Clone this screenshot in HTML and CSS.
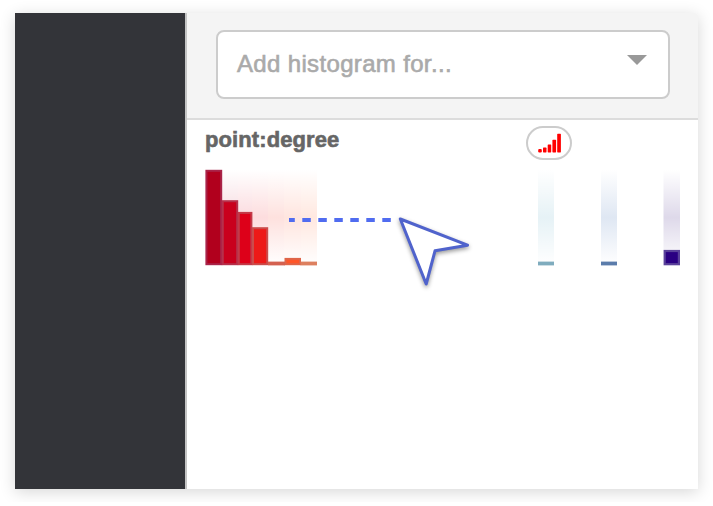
FILE: index.html
```html
<!DOCTYPE html>
<html lang="en">
<head>
<meta charset="utf-8">
<title>Histograms</title>
<link rel="stylesheet" href="styles.css">
</head>
<body>
<div class="window">
  <aside class="sidebar"></aside>
  <main class="panel">
    <header class="toolbar">
      <div class="select">
        <span class="placeholder">Add histogram for...</span>
        <svg class="caret" width="20" height="10" viewBox="0 0 20 10"><path d="M0 0H20L10 10Z" fill="#999"/></svg>
      </div>
    </header>
    <section class="histogram">
      <div class="title-row">
        <h2 class="title">point:degree</h2>
        <button class="encode" aria-label="Color by value">
          <svg width="24" height="20" viewBox="-1 -.6 24 20" fill="#f00"><rect x="0.2" y="15.3" width="3.6" height="3.5" rx="1.2"/><rect x="5" y="14" width="3.5" height="4.8" rx=".6"/><rect x="9.7" y="10.8" width="3.5" height="8" rx=".6"/><rect x="14.4" y="6.2" width="3.7" height="12.6" rx=".6"/><rect x="19.2" y="0.2" width="3.7" height="18.6" rx=".6"/></svg>
        </button>
      </div>
      <svg class="chart" width="480" height="100" viewBox="205 168 480 100">
        <defs>
          <linearGradient id="fade" x1="0" y1="0" x2="0" y2="1">
            <stop offset="0" stop-color="#fff" stop-opacity="1"/>
            <stop offset=".5" stop-color="#fff" stop-opacity="0"/>
            <stop offset="1" stop-color="#fff" stop-opacity="1"/>
          </linearGradient>
        </defs>
        <g>
          <rect x="222" y="170" width="16" height="94" fill="#f7dbe0"/>
          <rect x="238" y="170" width="14" height="94" fill="#fbdbdf"/>
          <rect x="252" y="170" width="16" height="94" fill="#fdddde"/>
          <rect x="268" y="170" width="16" height="94" fill="#fee1de"/>
          <rect x="284" y="170" width="17" height="94" fill="#ffe5df"/>
          <rect x="301" y="170" width="16" height="94" fill="#ffe8e0"/>
          <rect x="538" y="170" width="16" height="94" fill="#e6f2f6"/>
          <rect x="601" y="170" width="16" height="94" fill="#dfe7f3"/>
          <rect x="663.5" y="170" width="16.5" height="94" fill="#ded9ea"/>
          <rect x="205" y="170" width="476" height="95" fill="url(#fade)"/>
        </g>
        <g stroke-width="2">
          <rect x="206.4" y="170.8" width="14.8" height="93.4" fill="#b1001d" stroke="#a92449"/>
          <rect x="222.8" y="201.2" width="14.4" height="63" fill="#c9001d" stroke="#b6304b"/>
          <rect x="238.8" y="212.9" width="12.6" height="51.3" fill="#dd0019" stroke="#c33a48"/>
          <rect x="253" y="228.2" width="14.2" height="36" fill="#ed1a18" stroke="#cb4c4b"/>
          <rect x="285.5" y="258.9" width="14.5" height="5.3" fill="#ff5528" stroke="#df6549"/>
        </g>
        <rect x="268" y="261.6" width="17" height="3.8" fill="#d46150"/>
        <rect x="300.5" y="261.6" width="16.5" height="3.8" fill="#dd805f"/>
        <rect x="538" y="261.6" width="16" height="3.8" fill="#7facbe"/>
        <rect x="601" y="261.6" width="16" height="3.8" fill="#5b7cab"/>
        <rect x="664.7" y="251" width="14.2" height="13.2" fill="#2a0082" stroke="#5a429a" stroke-width="2.2"/>
      </svg>
    </section>
  </main>
  <svg class="drag-cursor" width="200" height="90" viewBox="284 205 200 90">
    <path d="M289 220H391" stroke="#506cf0" stroke-width="4" stroke-dasharray="8.5 7.5" stroke-dashoffset="2.7" fill="none"/>
    <path class="pointer" d="M400.3 219L467.5 245.2L435 250.8L426.2 284Z" fill="#fff" stroke="#5063cc" stroke-width="3" stroke-linejoin="round"/>
  </svg>
</div>
</body>
</html>
```

FILE: styles.css
```css
* { box-sizing: border-box; }
body {
  margin: 0;
  padding: 13px 15px;
  background: #fff;
  font-family: "Liberation Sans", Arial, sans-serif;
}
.window {
  position: relative;
  display: flex;
  width: 683px;
  height: 476px;
  background: #fff;
  border-radius: 0 3px 0 0;
  box-shadow: 0 3px 16px rgba(0, 0, 0, .16);
}
.sidebar {
  flex: 0 0 172px;
  background: #333439;
  border-right: 2px solid #c4c4c4;
}
.panel { flex: 1; }
.toolbar {
  height: 107px;
  padding: 17px 28px 0 29px;
  background: #f4f4f4;
  border-bottom: 2px solid #dcdcdc;
  border-radius: 0 3px 0 0;
}
.select {
  display: flex;
  justify-content: space-between;
  height: 69px;
  padding: 18px 21px 0 19px;
  background: #fff;
  border: 2px solid #ccc;
  border-radius: 8px;
}
.placeholder {
  color: #aaa;
  font-size: 24px;
  line-height: 28px;
  letter-spacing: .34px;
  -webkit-text-stroke: .6px #aaa;
}
.caret { margin-top: 5px; }
.histogram { padding: 6px 0 0 18px; }
.title-row {
  display: flex;
  justify-content: space-between;
  height: 34px;
  padding-right: 126px;
}
.title {
  margin: 0;
  color: #666;
  font-size: 22px;
  line-height: 27px;
  letter-spacing: .1px;
  -webkit-text-stroke: .6px #666;
}
.encode {
  display: flex;
  align-items: center;
  justify-content: center;
  width: 46px;
  height: 34px;
  padding: 0;
  background: #fff;
  border: 2px solid #ccc;
  border-radius: 17px;
}
.chart { display: block; margin-top: 8px; }
.drag-cursor {
  position: absolute;
  left: 269px;
  top: 192px;
  overflow: visible;
}
.pointer { filter: drop-shadow(0 2px 2px rgba(0, 0, 0, .4)); }
```
